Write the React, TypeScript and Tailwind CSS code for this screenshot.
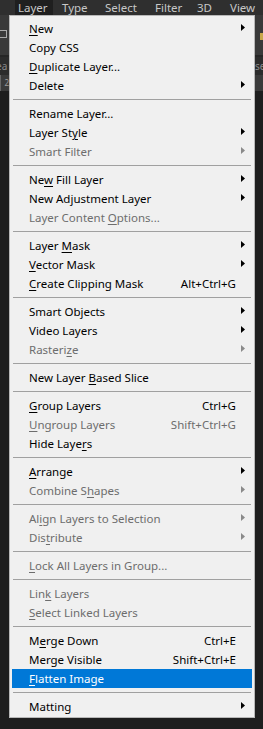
import React from "react";

type Item =
  | { label: string; u?: number; disabled?: boolean; sub?: boolean; sc?: string; active?: boolean }
  | "sep";

const items: Item[] = [
  { label: "New", u: 0, sub: true },
  { label: "Copy CSS" },
  { label: "Duplicate Layer...", u: 0 },
  { label: "Delete", sub: true },
  "sep",
  { label: "Rename Layer..." },
  { label: "Layer Style", u: 8, sub: true },
  { label: "Smart Filter", disabled: true, sub: true },
  "sep",
  { label: "New Fill Layer", u: 2, sub: true },
  { label: "New Adjustment Layer", sub: true },
  { label: "Layer Content Options...", u: 14, disabled: true },
  "sep",
  { label: "Layer Mask", u: 6, sub: true },
  { label: "Vector Mask", u: 0, sub: true },
  { label: "Create Clipping Mask", u: 0, sc: "Alt+Ctrl+G" },
  "sep",
  { label: "Smart Objects", sub: true },
  { label: "Video Layers", sub: true },
  { label: "Rasterize", u: 7, disabled: true, sub: true },
  "sep",
  { label: "New Layer Based Slice", u: 10 },
  "sep",
  { label: "Group Layers", u: 0, sc: "Ctrl+G" },
  { label: "Ungroup Layers", u: 0, disabled: true, sc: "Shift+Ctrl+G" },
  { label: "Hide Layers", u: 9 },
  "sep",
  { label: "Arrange", u: 0, sub: true },
  { label: "Combine Shapes", u: 9, disabled: true, sub: true },
  "sep",
  { label: "Align Layers to Selection", u: 2, disabled: true, sub: true },
  { label: "Distribute", u: 3, disabled: true, sub: true },
  "sep",
  { label: "Lock All Layers in Group...", u: 0, disabled: true },
  "sep",
  { label: "Link Layers", u: 3, disabled: true },
  { label: "Select Linked Layers", u: 0, disabled: true },
  "sep",
  { label: "Merge Down", u: 1, sc: "Ctrl+E" },
  { label: "Merge Visible", sc: "Shift+Ctrl+E" },
  { label: "Flatten Image", u: 0, active: true },
  "sep",
  { label: "Matting", sub: true },
];

function Label({ text, u }: { text: string; u?: number }) {
  if (u === undefined) return <>{text}</>;
  return (
    <>
      {text.slice(0, u)}
      <span className="underline decoration-1 underline-offset-[2px]">{text[u]}</span>
      {text.slice(u + 1)}
    </>
  );
}

function Arrow({ color }: { color: string }) {
  return (
    <svg width="4" height="7" viewBox="0 0 4 7" className="-translate-y-[1px]">
      <path d="M0 0 L4 3.5 L0 7 Z" fill={color} />
    </svg>
  );
}

export default function App() {
  const font = { fontFamily: '"Noto Sans", "Open Sans", sans-serif' };
  return (
    <div className="w-[263px] h-[729px] bg-[#1e1e1e] flex flex-col overflow-hidden" style={font}>
      {/* menu bar */}
      <div className="h-[15px] bg-[#2f2f2f] flex items-stretch text-[11.5px] leading-[15px] text-[#c8c8c8] shrink-0">
        <div className="ml-[15px] w-[38px] pl-[3px] bg-[#1f1f1f]">Layer</div>
        <div className="ml-[6px] w-[43px] pl-[3px]">Type</div>
        <div className="w-[50px] pl-[3px]">Select</div>
        <div className="w-[42px] pl-[3px]">Filter</div>
        <div className="w-[33px] pl-[3px]">3D</div>
        <div className="w-[36px] pl-[3px]">View</div>
      </div>
      <div className="flex items-start">
        {/* left strip */}
        <div className="w-[9px] shrink-0 flex flex-col">
          <div className="h-[40px] bg-[#393939] flex flex-col">
            <div className="mt-[15px] ml-[0px] w-[7px] h-[8px] border border-[#a8a8a8] border-l-0" />
          </div>
          <div className="h-[2px] bg-[#262626]" />
          <div className="h-[18px] bg-[#2c2c2c] text-[10px] leading-[18px] text-[#8a8a8a] overflow-hidden whitespace-nowrap -indent-[4px]">
            ea
          </div>
          <div className="h-[16px] bg-[#3a3a3a] flex">
            <div className="w-[1px] h-full bg-[#666]" />
            <div className="text-[8px] leading-[16px] text-[#9a9a9a] ml-[4px]">2</div>
          </div>
        </div>
        {/* menu panel */}
        <div className="w-[246px] shrink-0 bg-[#f0f0f0] border border-[#b8b8b8] pt-[3px] pb-[1px] px-[2px] text-[11.5px] leading-[19px]">
          {items.map((it, i) => {
            if (it === "sep") {
              return (
                <div key={i} className="h-[9px] flex flex-col justify-start pt-[4px]">
                  <div className="mx-[1px] h-[1px] bg-[#a0a0a0]" />
                </div>
              );
            }
            const color = it.active ? "text-white" : it.disabled ? "text-[#6d6d6d]" : "text-black";
            const arrowColor = it.disabled ? "#8a8a8a" : "#000";
            return (
              <div
                key={i}
                className={`h-[19px] flex items-center pl-[17px] whitespace-nowrap ${color} ${
                  it.active ? "bg-[#0078d7]" : ""
                }`}
              >
                <div className="flex-1">
                  <Label text={it.label} u={it.u} />
                </div>
                {it.sc && <div>{it.sc}</div>}
                <div className="w-[16px] h-full flex items-center pl-[5px]">
                  {it.sub && <Arrow color={arrowColor} />}
                </div>
              </div>
            );
          })}
        </div>
        {/* right strip */}
        <div className="w-[8px] shrink-0 flex flex-col">
          <div className="h-[40px] bg-[#393939] flex flex-col items-end">
            <div className="mt-[18px] w-[3px] h-[7px] bg-[#c9a74a]" />
          </div>
          <div className="h-[2px] bg-[#262626]" />
          <div className="h-[18px] bg-[#2c2c2c] text-[10px] leading-[18px] text-[#8a8a8a] overflow-hidden whitespace-nowrap">
            se
          </div>
          <div className="h-[16px] bg-[#3a3a3a]" />
        </div>
      </div>
    </div>
  );
}
